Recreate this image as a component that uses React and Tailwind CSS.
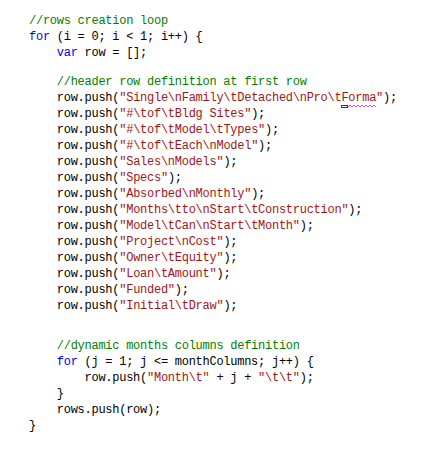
import React from "react";

const K = ({ children }) => <span className="text-[#0000ff]">{children}</span>;
const S = ({ children }) => <span className="text-[#a31515]">{children}</span>;
const C = ({ children }) => <span className="text-[#008000]">{children}</span>;

const Line = ({ indent = 0, children, className = "" }) => (
  <div className={"whitespace-pre h-[16px] leading-[16px] " + className}>
    {" ".repeat(indent * 4)}
    {children}
  </div>
);

const pushes = [
  "#\\tof\\tBldg Sites",
  "#\\tof\\tModel\\tTypes",
  "#\\tof\\tEach\\nModel",
  "Sales\\nModels",
  "Specs",
  "Absorbed\\nMonthly",
  "Months\\tto\\nStart\\tConstruction",
  "Model\\tCan\\nStart\\tMonth",
  "Project\\nCost",
  "Owner\\tEquity",
  "Loan\\tAmount",
  "Funded",
  "Initial\\tDraw",
];

export default function App() {
  return (
    <div
      className="w-[441px] h-[450px] bg-white text-black pt-[13px] pl-[29px] text-[12px] tracking-[-0.26px]"
      style={{ fontFamily: '"Liberation Mono", monospace' }}
    >
      <Line>
        <C>//rows creation loop</C>
      </Line>
      <Line>
        <K>for</K> (i = 0; i &lt; 1; i++) {"{"}
      </Line>
      <Line indent={1}>
        <K>var</K> row = [];
      </Line>
      <Line indent={1} className="mt-[13px]">
        <C>//header row definition at first row</C>
      </Line>
      <Line indent={1}>
        row.push(
        <S>
          "Single\nFamily\tDetached\nPro\t
          <span className="relative">
            Forma
            <span className="absolute left-[0px] top-[14px] w-[7px] h-[3px] border border-[#2020e0]" />
            <svg
              className="absolute left-[7px] top-[13px]"
              width="28"
              height="4"
              viewBox="0 0 28 4"
            >
              <path
                d="M0 3 L2 1 L4 3 L6 1 L8 3 L10 1 L12 3 L14 1 L16 3 L18 1 L20 3 L22 1 L24 3 L26 1 L28 3"
                fill="none"
                stroke="#ee44ee"
                strokeWidth="1"
              />
            </svg>
          </span>
          "
        </S>
        );
      </Line>
      {pushes.map((p) => (
        <Line indent={1} key={p}>
          row.push(<S>"{p}"</S>);
        </Line>
      ))}
      <Line indent={1} className="mt-[24px]">
        <C>//dynamic months columns definition</C>
      </Line>
      <Line indent={1}>
        <K>for</K> (j = 1; j &lt;= monthColumns; j++) {"{"}
      </Line>
      <Line indent={2}>
        row.push(<S>"Month\t"</S> + j + <S>"\t\t"</S>);
      </Line>
      <Line indent={1}>{"}"}</Line>
      <Line indent={1}>rows.push(row);</Line>
      <Line>{"}"}</Line>
    </div>
  );
}
